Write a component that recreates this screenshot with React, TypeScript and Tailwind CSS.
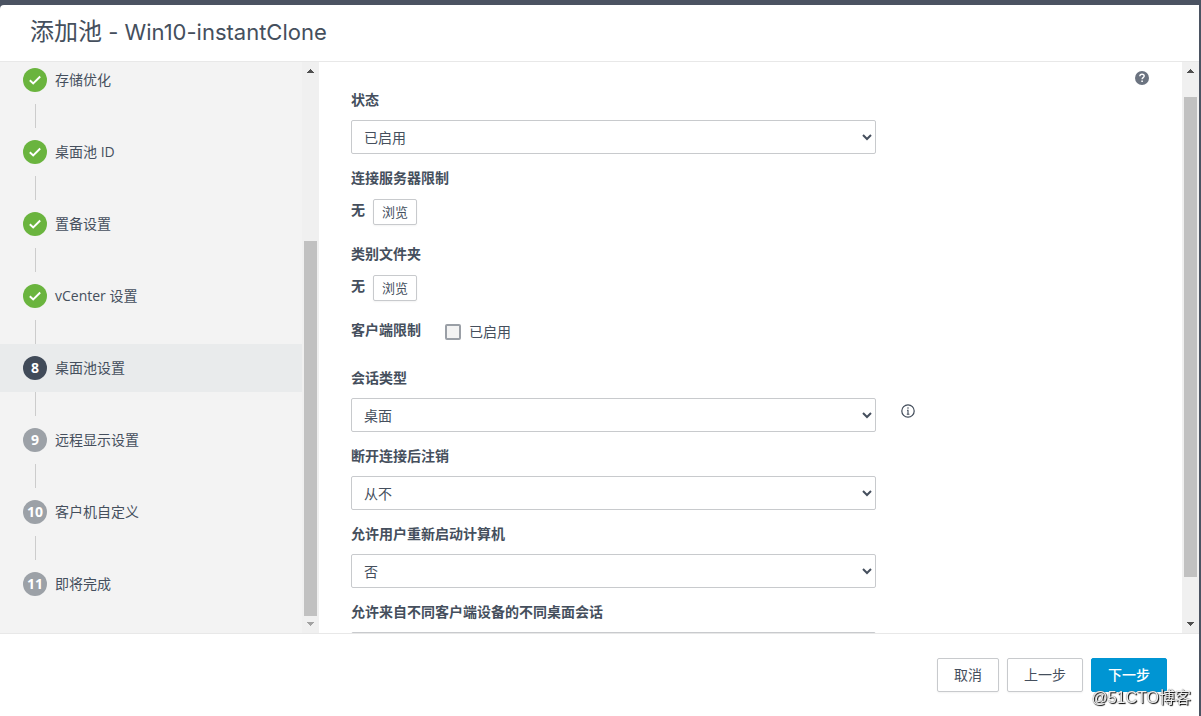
import React from "react";

const steps = [
  { label: "存储优化", state: "done" },
  { label: "桌面池 ID", state: "done" },
  { label: "置备设置", state: "done" },
  { label: "vCenter 设置", state: "done" },
  { label: "桌面池设置", state: "current", number: 8 },
  { label: "远程显示设置", state: "todo", number: 9 },
  { label: "客户机自定义", state: "todo", number: 10 },
  { label: "即将完成", state: "todo", number: 11 },
];

const circleColors: Record<string, string> = {
  done: "bg-[#6ab43e]",
  current: "bg-[#414b59]",
  todo: "bg-[#9ca1a7]",
};

function ScrollBar({ before, thumb, after, atEnd }: { before: number; thumb: number; after: number; atEnd?: boolean }) {
  return (
    <div aria-hidden="true" className="flex w-[17px] shrink-0 flex-col items-center bg-[#f0f0f0]">
      <svg width="17" height="17" viewBox="0 0 17 17" className="shrink-0" shapeRendering="crispEdges">
        <path d="M8 7h1v1h1v1h1v1h1v1H5v-1h1V9h1V8h1z" fill="#505050" />
      </svg>
      <div style={{ flexGrow: before }} />
      <div className="w-[13px] bg-[#c1c1c1]" style={{ flexGrow: thumb }} />
      <div style={{ flexGrow: after }} />
      <svg width="17" height="17" viewBox="0 0 17 17" className="shrink-0" shapeRendering="crispEdges">
        <path d="M5 6h7v1h-1v1h-1v1H9v1H8V9H7V8H6V7H5z" fill={atEnd ? "#a3a3a3" : "#505050"} />
      </svg>
    </div>
  );
}

function Steps() {
  return (
    <nav className="min-w-0 flex-1 overflow-hidden">
      <ol className="-mt-1.5">
        {steps.map((step, i) => (
          <li key={step.label}>
            {i > 0 && <div className="ml-[35px] h-6 w-px bg-[#cccccc]" />}
            <button
              type="button"
              className={`flex h-12 w-full items-center gap-2 pl-[23px] text-left ${
                step.state === "current" ? "bg-[#e9ebec]" : ""
              }`}
            >
              <span
                className={`flex size-6 shrink-0 items-center justify-center rounded-full font-bold text-white ${circleColors[step.state]}`}
              >
                {step.state === "done" ? (
                  <svg width="24" height="24" viewBox="0 0 24 24" fill="none" stroke="#fff" strokeWidth="1.9">
                    <path d="M6.8 12.2l3.4 3.3 7-7" />
                  </svg>
                ) : (
                  step.number
                )}
              </span>
              {step.label}
            </button>
          </li>
        ))}
      </ol>
    </nav>
  );
}

function SelectField({ id, label, value, info }: { id: string; label: string; value: string; info?: boolean }) {
  return (
    <div className="mb-3">
      <label htmlFor={id} className="mb-2 block font-bold">
        {label}
      </label>
      <div className="flex items-start">
        <select id={id} className="h-[34px] w-full max-w-[525px] rounded-xs border border-[#c8cacd] bg-white pl-2">
          <option>{value}</option>
        </select>
        {info && (
          <button type="button" aria-label="信息" className="mt-1.5 ml-[25px] shrink-0">
            <svg width="14" height="14" viewBox="0 0 14 14" fill="none" stroke="#414b59">
              <circle cx="7" cy="7" r="6.2" strokeWidth="1.2" />
              <path d="M7 3.3v1.5M6 6.3h1v4M5.8 10.3h2.6" strokeWidth="1.1" />
            </svg>
          </button>
        )}
      </div>
    </div>
  );
}

function BrowseField({ label }: { label: string }) {
  return (
    <div className="mb-4">
      <h2 className="mb-2 font-bold">{label}</h2>
      <div className="flex h-7 gap-2">
        <span className="font-bold">无</span>
        <button
          type="button"
          className="mt-px h-[26px] rounded-xs border border-[#c8cacd] bg-white px-2 text-[13px] leading-6 shadow-xs"
        >
          浏览
        </button>
      </div>
    </div>
  );
}

function Footer() {
  return (
    <footer className="flex shrink-0 justify-end gap-2 border-t border-[#e8e8e8] py-6 pr-8">
      <button type="button" className="h-[34px] rounded-xs border border-[#c8cacd] bg-white px-4 shadow-xs">
        取消
      </button>
      <button type="button" className="h-[34px] rounded-xs border border-[#c8cacd] bg-white px-4 shadow-xs">
        上一步
      </button>
      <button type="button" className="h-[34px] rounded-xs border border-[#0095d3] bg-[#0095d3] px-4 font-medium text-white">
        下一步
      </button>
    </footer>
  );
}

function App() {
  return (
    <div className="h-screen bg-[#4b5362] pt-[5px] pr-0.5 font-['Open_Sans','Noto_Sans_CJK_SC',sans-serif] text-sm leading-6 text-[#454f5d]">
      <div className="flex h-full flex-col rounded-tl-sm bg-white">
        <header className="shrink-0 border-b border-[#e8e8e8] px-[30px] pt-[11px] pb-[13px]">
          <h1 className="font-['Inter','Noto_Sans_CJK_SC',sans-serif] text-2xl leading-8 font-normal">
            添加池<span className="text-[22px]"> - Win10-instantClone</span>
          </h1>
        </header>

        <div className="flex min-h-0 flex-1">
          <aside className="flex w-[319px] shrink-0 bg-[#f3f3f3]">
            <Steps />
            <ScrollBar before={162} thumb={375} after={0} atEnd />
          </aside>

          <main className="flex min-w-0 flex-1 items-start justify-between overflow-hidden pt-[26px] pl-8">
            <form className="min-w-0 flex-1">
              <SelectField id="state" label="状态" value="已启用" />
              <BrowseField label="连接服务器限制" />
              <BrowseField label="类别文件夹" />
              <div className="mb-[22px] flex">
                <span className="mr-6 font-bold">客户端限制</span>
                <label className="mt-0.5 flex items-center gap-2">
                  <input
                    type="checkbox"
                    className="size-4 appearance-none rounded-xs border-2 border-[#9a9fa6] bg-[#f3f3f3] checked:bg-[#0095d3]"
                  />
                  已启用
                </label>
              </div>
              <SelectField id="session" label="会话类型" value="桌面" info />
              <SelectField id="logoff" label="断开连接后注销" value="从不" />
              <SelectField id="restart" label="允许用户重新启动计算机" value="否" />
              <SelectField id="multi" label="允许来自不同客户端设备的不同桌面会话" value="否" />
            </form>
            <button type="button" aria-label="帮助" className="-mt-[17px] mr-[33px]">
              <svg width="14" height="14" viewBox="0 0 14 14" fill="none">
                <circle cx="7" cy="7" r="7" fill="#6b7380" />
                <path d="M4.8 5.2c.1-1.2 1-1.9 2.2-1.9s2.2.7 2.2 1.8c0 1.5-2.1 1.6-2.1 3.1" stroke="#fff" strokeWidth="1.4" />
                <path d="M6.3 9.5h1.6v1.5H6.3z" fill="#fff" />
              </svg>
            </button>
          </main>
          <ScrollBar before={18} thumb={480} after={39} />
        </div>

        <Footer />
      </div>

      <span className="pointer-events-none fixed right-2.5 bottom-1.5 font-['Liberation_Sans','Noto_Sans_CJK_SC',sans-serif] text-base text-[#eeeeee] [text-shadow:1px_1px_1px_#000,0_0_1px_#555]">
        @51CTO博客
      </span>
    </div>
  );
}

export default App;
